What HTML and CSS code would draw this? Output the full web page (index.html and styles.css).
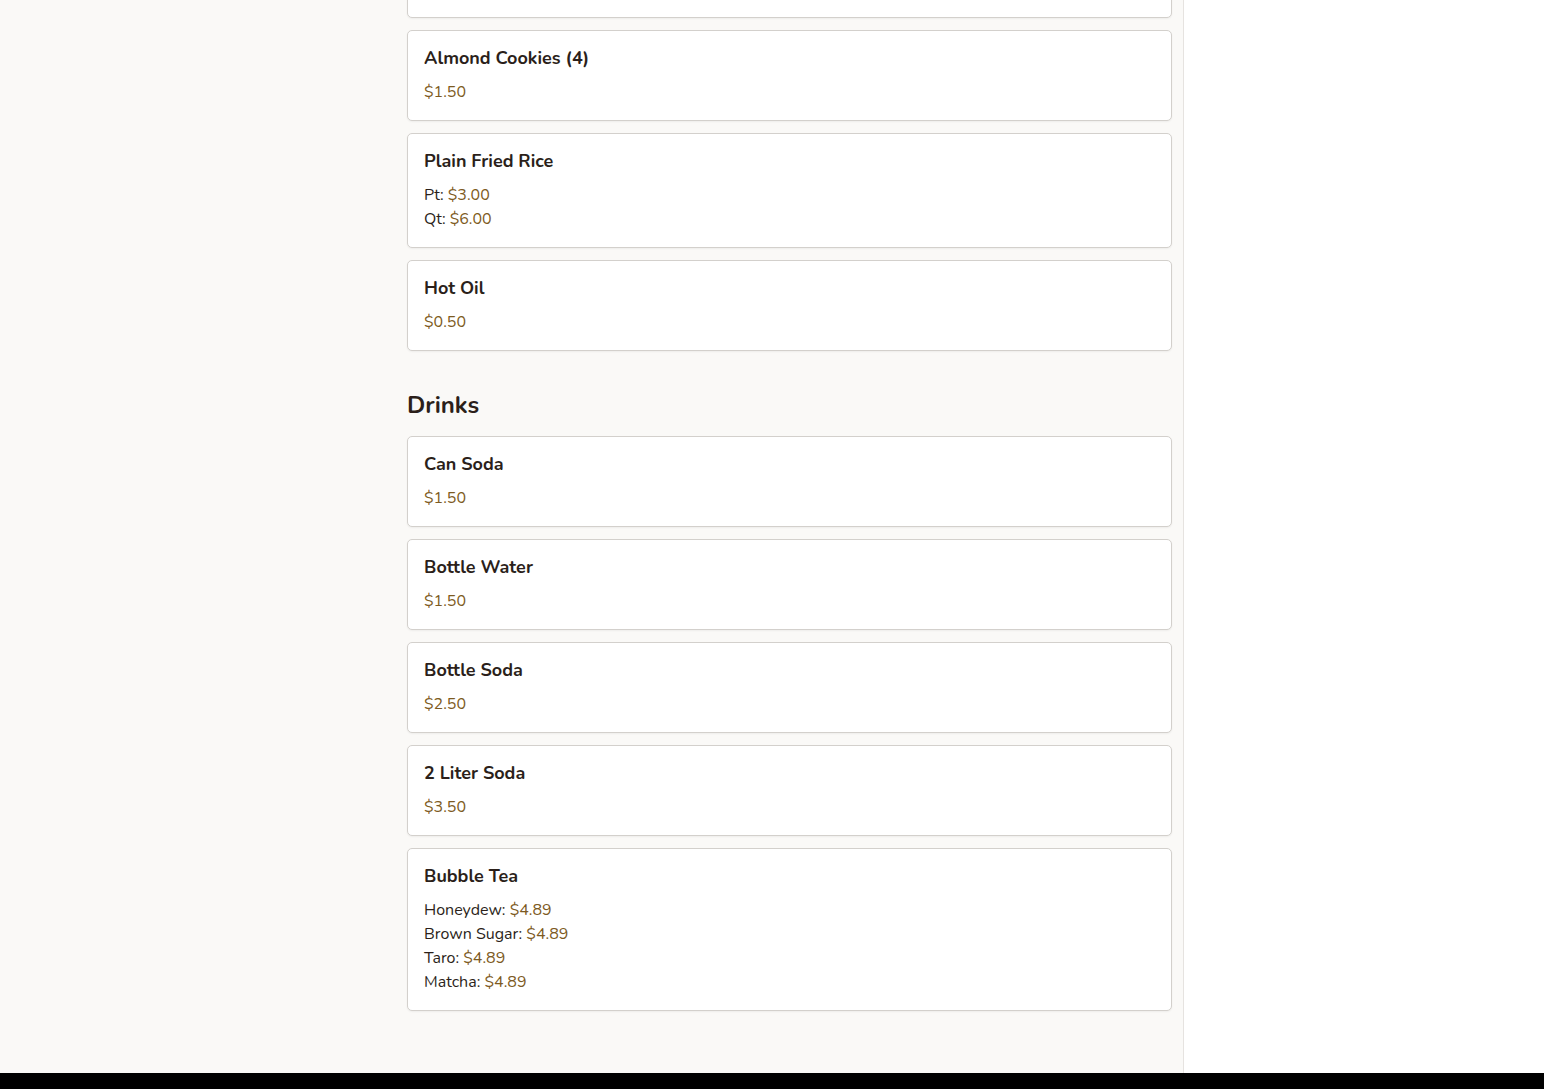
FILE: index.html
```html
<!DOCTYPE html>
<html lang="en">
<head>
<meta charset="utf-8">
<title>Menu</title>
<link rel="stylesheet" href="styles.css">
</head>
<body>
<div class="page">
  <main class="main">
    <div class="menu">
      <section class="section">
        <div class="list list-first">
          <div class="card">
            <h3 class="name">Egg Roll</h3>
            <div class="prices"><span class="price">$1.75</span></div>
          </div>
          <div class="card">
            <h3 class="name">Almond Cookies (4)</h3>
            <div class="prices"><span class="price">$1.50</span></div>
          </div>
          <div class="card">
            <h3 class="name">Plain Fried Rice</h3>
            <div class="prices">
              <div>Pt: <span class="price">$3.00</span></div>
              <div>Qt: <span class="price">$6.00</span></div>
            </div>
          </div>
          <div class="card">
            <h3 class="name">Hot Oil</h3>
            <div class="prices"><span class="price">$0.50</span></div>
          </div>
        </div>
      </section>
      <section class="section">
        <h2 class="heading">Drinks</h2>
        <div class="list">
          <div class="card">
            <h3 class="name">Can Soda</h3>
            <div class="prices"><span class="price">$1.50</span></div>
          </div>
          <div class="card">
            <h3 class="name">Bottle Water</h3>
            <div class="prices"><span class="price">$1.50</span></div>
          </div>
          <div class="card">
            <h3 class="name">Bottle Soda</h3>
            <div class="prices"><span class="price">$2.50</span></div>
          </div>
          <div class="card">
            <h3 class="name">2 Liter Soda</h3>
            <div class="prices"><span class="price">$3.50</span></div>
          </div>
          <div class="card">
            <h3 class="name">Bubble Tea</h3>
            <div class="prices">
              <div>Honeydew: <span class="price">$4.89</span></div>
              <div>Brown Sugar: <span class="price">$4.89</span></div>
              <div>Taro: <span class="price">$4.89</span></div>
              <div>Matcha: <span class="price">$4.89</span></div>
            </div>
          </div>
        </div>
      </section>
    </div>
  </main>
  <aside class="side"></aside>
</div>
<footer class="footer"></footer>
</body>
</html>
```
FILE: styles.css
```css
* { box-sizing: border-box; }
html, body { margin: 0; padding: 0; }
body {
  font-family: "Nunito", "Lato", "Open Sans", sans-serif;
  color: #2b1f1a;
  background: #ffffff;
  overflow: hidden;
}
.page {
  display: flex;
  align-items: stretch;
}
.main {
  width: 1184px;
  background: #faf9f7;
  border-right: 1px solid #e6e3e0;
  padding: 0 11px 62px 407px;
}
.side {
  flex: 1;
  background: #ffffff;
}
.menu {
  width: 765px;
}
.list {
  display: flex;
  flex-direction: column;
  gap: 12px;
}
.list-first {
  margin-top: -73px;
}
.card {
  background: #ffffff;
  border: 1px solid #d3d0cc;
  border-radius: 5px;
  padding: 17px 16px 16px;
  box-shadow: 0 1px 2px rgba(0,0,0,0.05);
}
.name {
  margin: 0;
  font-size: 18px;
  font-weight: 700;
  line-height: 20px;
  color: #2b1f1a;
}
.prices {
  margin-top: 12px;
  font-size: 16px;
  line-height: 24px;
  color: #2b1f1a;
}
.price {
  color: #7d5a22;
}
.heading {
  margin: 38px 0 15px;
  font-size: 24px;
  font-weight: 700;
  line-height: 32px;
  color: #2b1f1a;
}
.footer {
  height: 16px;
  background: #000000;
}
```
